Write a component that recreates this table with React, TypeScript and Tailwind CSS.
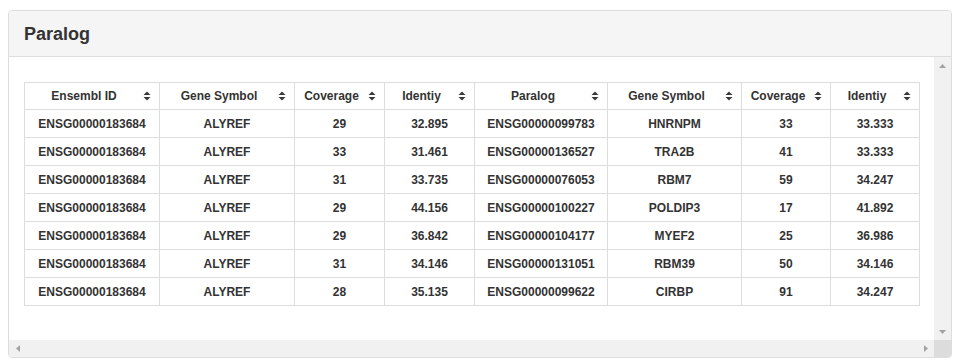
import React from "react";

const headers = [
  "Ensembl ID",
  "Gene Symbol",
  "Coverage",
  "Identiy",
  "Paralog",
  "Gene Symbol",
  "Coverage",
  "Identiy",
];

const rows = [
  ["ENSG00000183684", "ALYREF", "29", "32.895", "ENSG00000099783", "HNRNPM", "33", "33.333"],
  ["ENSG00000183684", "ALYREF", "33", "31.461", "ENSG00000136527", "TRA2B", "41", "33.333"],
  ["ENSG00000183684", "ALYREF", "31", "33.735", "ENSG00000076053", "RBM7", "59", "34.247"],
  ["ENSG00000183684", "ALYREF", "29", "44.156", "ENSG00000100227", "POLDIP3", "17", "41.892"],
  ["ENSG00000183684", "ALYREF", "29", "36.842", "ENSG00000104177", "MYEF2", "25", "36.986"],
  ["ENSG00000183684", "ALYREF", "31", "34.146", "ENSG00000131051", "RBM39", "50", "34.146"],
  ["ENSG00000183684", "ALYREF", "28", "35.135", "ENSG00000099622", "CIRBP", "91", "34.247"],
];

function SortIcon() {
  return (
    <svg width="8" height="10" viewBox="0 0 8 10" className="absolute right-[8px] top-1/2 -translate-y-1/2">
      <polygon points="4,0.5 7.5,4 0.5,4" fill="#3a3a3a" />
      <polygon points="0.5,6 7.5,6 4,9.5" fill="#3a3a3a" />
    </svg>
  );
}

function Arrow({ dir }: { dir: "up" | "down" | "left" | "right" }) {
  const pts =
    dir === "up"
      ? "0,4 3.5,0 7,4"
      : dir === "down"
      ? "0,0 7,0 3.5,4"
      : dir === "left"
      ? "4,0 4,7 0,3.5"
      : "0,0 0,7 4,3.5";
  const w = dir === "up" || dir === "down" ? 7 : 4;
  const h = dir === "up" || dir === "down" ? 4 : 7;
  return (
    <svg width={w} height={h} viewBox={`0 0 ${w} ${h}`}>
      <polygon points={pts} fill="#a3a3a3" />
    </svg>
  );
}

export default function App() {
  return (
    <div
      className="w-[960px] h-[364px] bg-white pt-[10px] pl-[8px] text-[#333]"
      style={{ fontFamily: '"Liberation Sans", Arial, sans-serif' }}
    >
      <div className="w-[944px] h-[348px] border border-[#dddddd] rounded-[4px] overflow-hidden flex flex-col bg-white">
        <div className="h-[46px] shrink-0 bg-[#f5f5f5] border-b border-[#dddddd] flex items-center px-[15px]">
          <h3 className="text-[18px] font-bold leading-none text-[#333]">Paralog</h3>
        </div>
        <div className="flex flex-1 min-h-0">
          <div className="flex-1 pl-[15px] pt-[25px] overflow-hidden">
            <div className="grid grid-cols-[134px_134px_89px_89px_132px_133px_88px_88px] gap-px bg-[#dddddd] p-px w-[896px] text-[12px] font-bold">
              {headers.map((h, i) => (
                <div
                  key={"h" + i}
                  className="relative bg-white h-[26px] flex items-center justify-center pl-[10px] pr-[26px] whitespace-nowrap"
                >
                  {h}
                  <SortIcon />
                </div>
              ))}
              {rows.map((r, ri) =>
                r.map((c, ci) => (
                  <div
                    key={ri + "-" + ci}
                    className="bg-white h-[27px] flex items-center justify-center whitespace-nowrap"
                  >
                    {c}
                  </div>
                ))
              )}
            </div>
          </div>
          <div className="w-[17px] shrink-0 bg-[#f1f1f1] flex flex-col justify-between">
            <div className="h-[17px] flex items-center justify-center">
              <Arrow dir="up" />
            </div>
            <div className="h-[17px] flex items-center justify-center">
              <Arrow dir="down" />
            </div>
          </div>
        </div>
        <div className="flex h-[17px] shrink-0">
          <div className="flex-1 bg-[#f1f1f1] flex justify-between">
            <div className="w-[17px] flex items-center justify-center">
              <Arrow dir="left" />
            </div>
            <div className="w-[17px] flex items-center justify-center">
              <Arrow dir="right" />
            </div>
          </div>
          <div className="w-[17px] bg-[#dcdcdc]" />
        </div>
      </div>
    </div>
  );
}
